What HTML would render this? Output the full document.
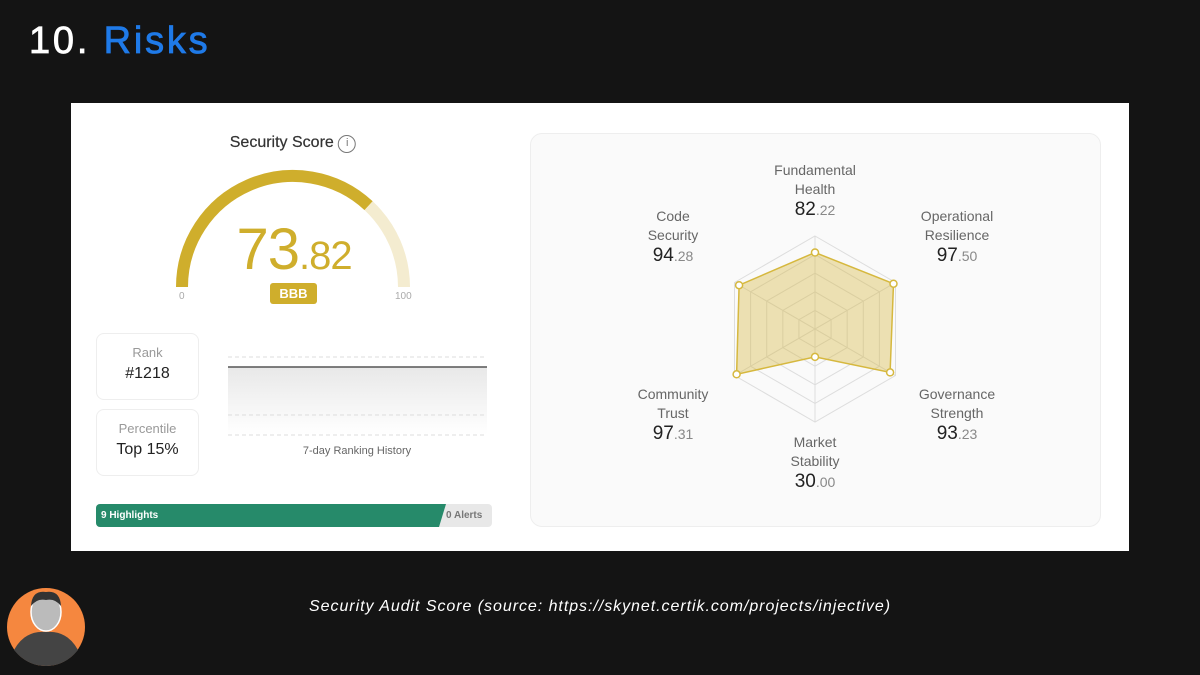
<!DOCTYPE html>
<html><head><meta charset="utf-8"><style>
*{margin:0;padding:0;box-sizing:border-box}
body{width:1200px;height:675px;background:#141414;position:relative;overflow:hidden;font-family:"Liberation Sans",sans-serif}
.a{position:absolute}
.c{text-align:center;transform:translateX(-50%);white-space:nowrap}
.lbl{color:#666;font-size:14px;line-height:19px}
.val{color:#222;font-size:19px;font-weight:normal}
.val span{color:#888;font-size:14px;font-weight:normal}
</style></head><body>
<div class="a" style="left:29px;top:20px;font-size:38px;font-weight:normal;color:#fff;letter-spacing:2.8px;-webkit-text-stroke:0.8px #fff">10. <span style="color:#1f7ae8;-webkit-text-stroke:0.8px #1f7ae8">Risks</span></div>
<div class="a" style="left:71px;top:103px;width:1058px;height:448px;background:#fff"></div>
<div class="a c" style="left:293px;top:134px;font-size:16px;color:#333;-webkit-text-stroke:0.2px #333">Security Score <span style="display:inline-block;width:18px;height:18px;border:1.5px solid #777;border-radius:50%;font-size:11px;line-height:15px;color:#777;vertical-align:1px;-webkit-text-stroke:0">i</span></div>
<svg class="a" style="left:0;top:0" width="1200" height="675">
<path d="M182 287 A111 111 0 0 1 368.6 205.7" fill="none" stroke="#cfae2c" stroke-width="12"/>
<path d="M368.6 205.7 A111 111 0 0 1 404 287" fill="none" stroke="#f4ecd0" stroke-width="12"/>
<defs><linearGradient id="g" x1="0" y1="0" x2="0" y2="1"><stop offset="0" stop-color="#e8e8e8"/><stop offset="1" stop-color="#fff"/></linearGradient></defs>
<rect x="228" y="367" width="259" height="68" fill="url(#g)"/>
<line x1="228" y1="357" x2="487" y2="357" stroke="#ddd" stroke-dasharray="4 3"/>
<line x1="228" y1="415" x2="487" y2="415" stroke="#ddd" stroke-dasharray="4 3"/>
<line x1="228" y1="435" x2="487" y2="435" stroke="#ddd" stroke-dasharray="4 3"/>
<line x1="228" y1="367" x2="487" y2="367" stroke="#555" stroke-width="1.5"/>
<rect x="96" y="504" width="396" height="23" rx="4" fill="#e8e8e8"/>
<path d="M100 504 H446 L439 527 H100 A4 4 0 0 1 96 523 V508 A4 4 0 0 1 100 504Z" fill="#268a6a"/>
<circle cx="46" cy="627" r="39" fill="#f5873f"/>
<path d="M14 650 Q25 630 46 632 Q67 630 78 650 Q65 666 46 666 Q27 666 14 650Z" fill="#444"/>
<ellipse cx="46" cy="612" rx="15" ry="19" fill="#bbb" stroke="#fff" stroke-width="1.5"/>
<path d="M31 606 Q32 590 46 592 Q60 590 61 606 Q55 598 46 600 Q37 598 31 606Z" fill="#333"/>
</svg>
<div class="a c" style="left:294px;top:216px;font-size:58px;color:#cfae2c;letter-spacing:-1px">73<span style="font-size:40px">.82</span></div>
<div class="a" style="left:270px;top:283px;width:47px;height:21px;background:#cfae2c;border-radius:3px;color:#fff;font-size:13px;font-weight:bold;text-align:center;line-height:21px">BBB</div>
<div class="a" style="left:179px;top:291px;font-size:10px;color:#aaa">0</div>
<div class="a" style="left:395px;top:291px;font-size:10px;color:#aaa">100</div>
<div class="a" style="left:96px;top:333px;width:103px;height:67px;border:1px solid #eee;border-radius:8px;text-align:center"><div style="color:#999;font-size:13px;margin-top:11px">Rank</div><div style="color:#222;font-size:16px;margin-top:5px">#1218</div></div>
<div class="a" style="left:96px;top:409px;width:103px;height:67px;border:1px solid #eee;border-radius:8px;text-align:center"><div style="color:#999;font-size:13px;margin-top:11px">Percentile</div><div style="color:#222;font-size:16px;margin-top:5px">Top 15%</div></div>
<div class="a c" style="left:357px;top:445px;font-size:11px;color:#666">7-day Ranking History</div>
<div class="a" style="left:101px;top:510px;font-size:10px;font-weight:bold;color:#fff">9 Highlights</div>
<div class="a" style="left:446px;top:510px;font-size:10px;font-weight:bold;color:#777">0 Alerts</div>
<div class="a" style="left:530px;top:133px;width:571px;height:394px;background:#fafafa;border:1px solid #eee;border-radius:12px"></div>
<svg class="a" style="left:0;top:0" width="1200" height="675">
<g fill="none" stroke="#ddd" stroke-width="1">
<polygon points="815,236 895.5,282.5 895.5,375.5 815,422 734.5,375.5 734.5,282.5"/>
<polygon points="815,254.6 879.4,291.8 879.4,366.2 815,403.4 750.6,366.2 750.6,291.8"/>
<polygon points="815,273.2 863.3,301.1 863.3,356.9 815,384.8 766.7,356.9 766.7,301.1"/>
<polygon points="815,291.8 847.2,310.4 847.2,347.6 815,366.2 782.8,347.6 782.8,310.4"/>
<polygon points="815,310.4 831.1,319.7 831.1,338.3 815,347.6 798.9,338.3 798.9,319.7"/>
<line x1="815" y1="236" x2="815" y2="422"/><line x1="895.5" y1="282.5" x2="734.5" y2="375.5"/><line x1="895.5" y1="375.5" x2="734.5" y2="282.5"/>
</g>
<polygon points="815,252.5 893.5,283.7 890.1,372.4 815,356.9 736.6,374.3 739.1,285.2" fill="rgba(215,185,70,0.4)" stroke="#d6b83e" stroke-width="1.5"/>
<g fill="#fff" stroke="#d6b83e" stroke-width="1.5">
<circle cx="815" cy="252.5" r="3.5"/><circle cx="893.5" cy="283.7" r="3.5"/><circle cx="890.1" cy="372.4" r="3.5"/><circle cx="815" cy="356.9" r="3.5"/><circle cx="736.6" cy="374.3" r="3.5"/><circle cx="739.1" cy="285.2" r="3.5"/>
</g></svg>
<div class="a c" style="left:815px;top:161px"><div class="lbl">Fundamental<br>Health</div><div class="val">82<span>.22</span></div></div>
<div class="a c" style="left:673px;top:207px"><div class="lbl">Code<br>Security</div><div class="val">94<span>.28</span></div></div>
<div class="a c" style="left:957px;top:207px"><div class="lbl">Operational<br>Resilience</div><div class="val">97<span>.50</span></div></div>
<div class="a c" style="left:673px;top:385px"><div class="lbl">Community<br>Trust</div><div class="val">97<span>.31</span></div></div>
<div class="a c" style="left:957px;top:385px"><div class="lbl">Governance<br>Strength</div><div class="val">93<span>.23</span></div></div>
<div class="a c" style="left:815px;top:433px"><div class="lbl">Market<br>Stability</div><div class="val">30<span>.00</span></div></div>
<div class="a c" style="left:600px;top:598px;font-size:16px;font-style:italic;color:#fff;letter-spacing:0.95px">Security Audit Score (source: https://skynet.certik.com/projects/injective)</div>
</body></html>
